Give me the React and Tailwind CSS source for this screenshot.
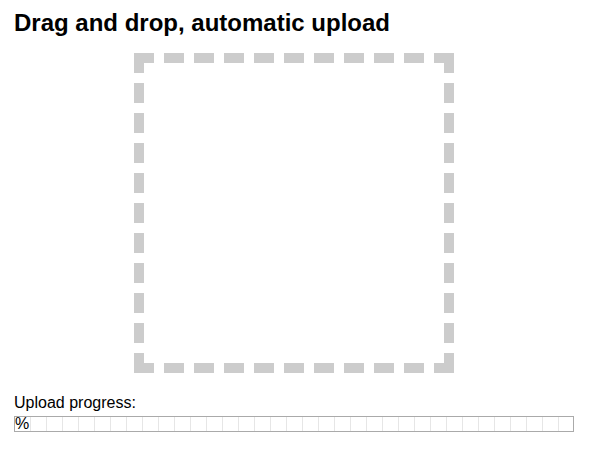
import React from 'react';

const cells = Array.from({ length: 35 });

export default function App() {
  return (
    <div className="min-h-screen bg-white px-[14px] pt-[9px] text-black font-['Liberation_Sans',Arial,sans-serif]">
      <h1 className="text-[24px] font-bold leading-[28px]">Drag and drop, automatic upload</h1>
      <div className="ml-[120px] mt-[16px] h-[320px] w-[320px] border-[10px] border-dashed border-[#cccccc]"></div>
      <p className="mt-[21px] text-[16px] leading-[18px]">Upload progress:</p>
      <div className="relative mt-[4px] flex h-[16px] w-[560px] overflow-hidden border border-[#aaaaaa]">
        {cells.map((_, i) => (
          <div key={i} className="h-full w-[16px] shrink-0 border-r border-[#e6e6e6]"></div>
        ))}
        <span className="absolute left-0 top-[-2px] text-[16px] leading-[18px]">%</span>
      </div>
    </div>
  );
}
